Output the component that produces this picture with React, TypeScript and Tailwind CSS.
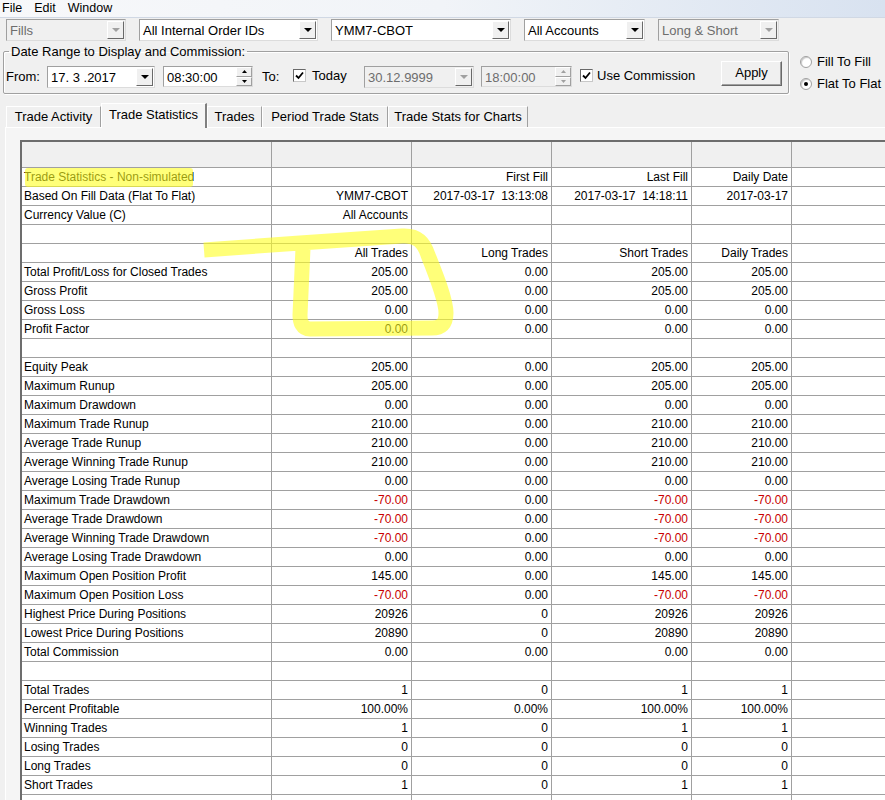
import React from "react";

// statistics grid data: label, all, long, short, daily
const rows: string[][] = [
  ["Trade Statistics - Non-simulated", "", "First Fill", "Last Fill", "Daily Date"],
  ["Based On Fill Data (Flat To Flat)", "YMM7-CBOT", "2017-03-17  13:13:08", "2017-03-17  14:18:11", "2017-03-17"],
  ["Currency Value (C)", "All Accounts", "", "", ""],
  ["", "", "", "", ""],
  ["", "All Trades", "Long Trades", "Short Trades", "Daily Trades"],
  ["Total Profit/Loss for Closed Trades", "205.00", "0.00", "205.00", "205.00"],
  ["Gross Profit", "205.00", "0.00", "205.00", "205.00"],
  ["Gross Loss", "0.00", "0.00", "0.00", "0.00"],
  ["Profit Factor", "0.00", "0.00", "0.00", "0.00"],
  ["", "", "", "", ""],
  ["Equity Peak", "205.00", "0.00", "205.00", "205.00"],
  ["Maximum Runup", "205.00", "0.00", "205.00", "205.00"],
  ["Maximum Drawdown", "0.00", "0.00", "0.00", "0.00"],
  ["Maximum Trade Runup", "210.00", "0.00", "210.00", "210.00"],
  ["Average Trade Runup", "210.00", "0.00", "210.00", "210.00"],
  ["Average Winning Trade Runup", "210.00", "0.00", "210.00", "210.00"],
  ["Average Losing Trade Runup", "0.00", "0.00", "0.00", "0.00"],
  ["Maximum Trade Drawdown", "-70.00", "0.00", "-70.00", "-70.00"],
  ["Average Trade Drawdown", "-70.00", "0.00", "-70.00", "-70.00"],
  ["Average Winning Trade Drawdown", "-70.00", "0.00", "-70.00", "-70.00"],
  ["Average Losing Trade Drawdown", "0.00", "0.00", "0.00", "0.00"],
  ["Maximum Open Position Profit", "145.00", "0.00", "145.00", "145.00"],
  ["Maximum Open Position Loss", "-70.00", "0.00", "-70.00", "-70.00"],
  ["Highest Price During Positions", "20926", "0", "20926", "20926"],
  ["Lowest Price During Positions", "20890", "0", "20890", "20890"],
  ["Total Commission", "0.00", "0.00", "0.00", "0.00"],
  ["", "", "", "", ""],
  ["Total Trades", "1", "0", "1", "1"],
  ["Percent Profitable", "100.00%", "0.00%", "100.00%", "100.00%"],
  ["Winning Trades", "1", "0", "1", "1"],
  ["Losing Trades", "0", "0", "0", "0"],
  ["Long Trades", "0", "0", "0", "0"],
  ["Short Trades", "1", "0", "1", "1"],
  ["", "", "", "", ""],
];

const tabs = [
  { name: "Trade Activity", w: "w-[95px]" },
  { name: "Trade Statistics", w: "w-[106px]", active: true },
  { name: "Trades", w: "w-[55px]" },
  { name: "Period Trade Stats", w: "w-[126px]" },
  { name: "Trade Stats for Charts", w: "w-[140px]" },
];

function DropButton({ disabled }: { disabled?: boolean }) {
  return (
    <div className="w-[17px] shrink-0 my-[1px] mr-[1px] flex items-center justify-center bg-[#f0f0f0] border border-t-white border-l-white border-r-[#696969] border-b-[#696969]">
      <span
        className={`w-0 h-0 border-l-[4px] border-r-[4px] border-t-[4px] border-l-transparent border-r-transparent ${
          disabled ? "border-t-[#a0a0a0]" : "border-t-black"
        }`}
      />
    </div>
  );
}

function Combo({ w, text, disabled }: { w: string; text: string; disabled?: boolean }) {
  return (
    <div
      className={`${w} shrink-0 h-[22px] flex border border-t-[#a0a0a0] border-l-[#a0a0a0] border-r-[#dcdcdc] border-b-[#dcdcdc] ${
        disabled ? "bg-[#f0f0f0] text-[#6d6d6d]" : "bg-white text-black"
      }`}
    >
      <span className="flex-1 pl-[3px] pt-[1px] leading-[20px] whitespace-pre overflow-hidden">{text}</span>
      <DropButton disabled={disabled} />
    </div>
  );
}

function SpinBox({ w, text, disabled }: { w: string; text: string; disabled?: boolean }) {
  const tri = disabled ? "#a0a0a0" : "#000";
  return (
    <div
      className={`${w} shrink-0 h-[21px] flex border border-t-[#a0a0a0] border-l-[#a0a0a0] border-r-[#dcdcdc] border-b-[#dcdcdc] ${
        disabled ? "bg-[#f0f0f0] text-[#6d6d6d]" : "bg-white text-black"
      }`}
    >
      <span className="flex-1 pl-[3px] pt-[1px] leading-[19px]">{text}</span>
      <div className="w-[16px] flex flex-col">
        <div className="flex-1 flex items-center justify-center bg-[#f0f0f0] border border-t-white border-l-white border-r-[#a0a0a0] border-b-[#a0a0a0]">
          <svg width="5" height="3" viewBox="0 0 5 3">
            <path d="M0 3 L2.5 0 L5 3 Z" fill={tri} />
          </svg>
        </div>
        <div className="flex-1 flex items-center justify-center bg-[#f0f0f0] border border-t-white border-l-white border-r-[#a0a0a0] border-b-[#a0a0a0]">
          <svg width="5" height="3" viewBox="0 0 5 3">
            <path d="M0 0 L2.5 3 L5 0 Z" fill={tri} />
          </svg>
        </div>
      </div>
    </div>
  );
}

function CheckBox() {
  return (
    <span className="w-[13px] h-[13px] shrink-0 bg-white border border-t-[#696969] border-l-[#696969] border-r-[#c8c8c8] border-b-[#c8c8c8] flex items-center justify-center">
      <svg width="9" height="9" viewBox="0 0 9 9">
        <path d="M1 4.5 L3.5 7 L8 1.5" stroke="#000" strokeWidth="1.8" fill="none" />
      </svg>
    </span>
  );
}

function Radio({ label, checked }: { label: string; checked?: boolean }) {
  return (
    <div className="h-[16px] flex items-center gap-[5px]">
      <span className="w-[12px] h-[12px] rounded-full bg-white border border-[#a0a0a0] shadow-[inset_1px_1px_1px_#c8c8c8] flex items-center justify-center">
        {checked && <span className="w-[4px] h-[4px] rounded-full bg-black" />}
      </span>
      <span className="leading-[16px]">{label}</span>
    </div>
  );
}

function GridRow({ cells, header }: { cells: string[]; header?: boolean }) {
  const line = "border-r border-b border-[#a0a0a0]";
  const color = (v: string) => (v.startsWith("-") ? "text-[#c80000]" : "text-black");
  return (
    <div className={`flex shrink-0 ${header ? "h-[26px] bg-[#f0f0f0]" : "h-[19px] bg-white"}`}>
      <div className={`w-[250px] shrink-0 ${line} pl-[2px] leading-[18px] whitespace-nowrap overflow-hidden`}>
        {cells[0]}
      </div>
      {cells.slice(1).map((v, i) => (
        <div
          key={i}
          className={`${i === 3 ? "w-[100px]" : "w-[140px]"} shrink-0 ${line} pr-[3px] text-right leading-[18px] whitespace-pre ${color(v)}`}
        >
          {v}
        </div>
      ))}
      <div className="flex-1 border-b border-[#a0a0a0]" />
    </div>
  );
}

export default function App() {
  return (
    <div className="relative w-[885px] h-[800px] overflow-hidden bg-[#f0f0f0] text-black text-[13px] font-['Liberation_Sans',Arial,sans-serif] flex flex-col">
      {/* MENU */}
      <div className="h-[18px] shrink-0 flex items-center gap-[12px] pl-[2px] text-[12.5px] bg-gradient-to-r from-[#f7f8fa] via-[#f1f4f8] to-[#d8e2f0] border-b border-[#d0d8e4]">
        <span>File</span>
        <span>Edit</span>
        <span>Window</span>
      </div>

      {/* FILTER COMBOS */}
      <div className="mt-[1px] flex pl-[6px] gap-[13px]">
        <Combo w="w-[120px]" text="Fills" disabled />
        <Combo w="w-[179px]" text="All Internal Order IDs" />
        <Combo w="w-[180px]" text="YMM7-CBOT" />
        <Combo w="w-[121px]" text="All Accounts" />
        <Combo w="w-[121px]" text="Long & Short" disabled />
      </div>

      {/* DATE RANGE */}
      <div className="mt-[3px] flex items-start">
        <fieldset className="ml-[3px] w-[786px] h-[50px] m-0 p-0 min-w-0 border border-[#a0a0a0] rounded-[2px] shadow-[inset_1px_1px_0_#fff,1px_1px_0_#fff]">
          <legend className="ml-[5px] px-[2px] leading-[15px]">Date Range to Display and Commission:</legend>
          <div className="h-[34px] flex items-start pl-[2px]">
            <span className="w-[41px] mt-[10px] leading-[16px]">From:</span>
            <div className="mt-[7px]">
              <Combo w="w-[108px]" text="17. 3 .2017" />
            </div>
            <div className="mt-[7px] ml-[8px]">
              <SpinBox w="w-[90px]" text="08:30:00" />
            </div>
            <span className="w-[31px] ml-[9px] mt-[10px] leading-[16px]">To:</span>
            <div className="mt-[10px]">
              <CheckBox />
            </div>
            <span className="w-[52px] ml-[6px] mt-[9px] leading-[16px]">Today</span>
            <div className="mt-[7px]">
              <Combo w="w-[110px]" text="30.12.9999" disabled />
            </div>
            <div className="mt-[7px] ml-[7px]">
              <SpinBox w="w-[91px]" text="18:00:00" disabled />
            </div>
            <div className="mt-[10px] ml-[8px]">
              <CheckBox />
            </div>
            <span className="w-[124px] ml-[4px] mt-[9px] leading-[16px]">Use Commission</span>
            <button className="mt-[2px] w-[61px] h-[25px] bg-[#f0f0f0] border border-t-white border-l-white border-r-[#696969] border-b-[#696969] shadow-[inset_-1px_-1px_0_#a0a0a0] leading-[20px] pb-[2px]">
              Apply
            </button>
          </div>
        </fieldset>
        <div className="ml-[11px] mt-[10px] flex flex-col gap-[6px]">
          <Radio label="Fill To Fill" />
          <Radio label="Flat To Flat" checked />
        </div>
      </div>

      {/* TABS */}
      <div className="mt-[9px] h-[24px] shrink-0 flex items-end pl-[6px]">
        {tabs.map((t) =>
          t.active ? (
            <div
              key={t.name}
              className={`${t.w} h-[25px] -mb-[1px] relative z-10 bg-[#f5f5f5] border-t border-l border-white border-r-2 border-r-[#808080] text-center leading-[21px]`}
            >
              {t.name}
            </div>
          ) : (
            <div
              key={t.name}
              className={`${t.w} h-[21px] bg-[#f0f0f0] border-t border-l border-white border-r border-r-[#a0a0a0] text-center leading-[20px]`}
            >
              {t.name}
            </div>
          )
        )}
      </div>

      {/* PANEL + GRID */}
      <div className="flex-1 ml-[5px] bg-[#f5f5f5] border-t border-l border-white pl-[14px] pt-[12px] flex flex-col min-h-0">
        <div className="flex flex-col border-t-2 border-l-2 border-[#6d6d6d] text-[12px]">
          <GridRow cells={["", "", "", "", ""]} header />
          {rows.map((r, i) => (
            <GridRow key={i} cells={r} />
          ))}
        </div>
      </div>

      {/* HIGHLIGHTER MARKS */}
      <svg className="absolute inset-0 pointer-events-none" width="885" height="800" viewBox="0 0 885 800">
        <rect x="25" y="168" width="168" height="19" rx="3" fill="#ffff20" opacity="0.6" />
        <path
          d="M204,250 L300,243 L402,236 C418,235 424,243 428,255 C436,275 446,300 446,313 C446,324 441,328 432,328 L310,329 C302,329 300,322 300,315 L303,248"
          stroke="#ffff20"
          strokeWidth="15"
          strokeLinejoin="round"
          fill="none"
          opacity="0.6"
        />
      </svg>
    </div>
  );
}
